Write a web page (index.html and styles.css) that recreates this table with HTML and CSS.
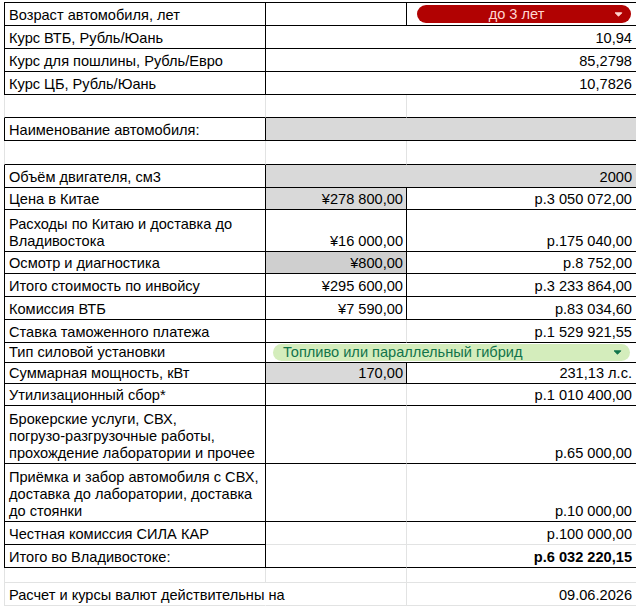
FILE: index.html
```html
<!DOCTYPE html>
<html lang="ru">
<head>
<meta charset="utf-8">
<title>Расчёт стоимости автомобиля</title>
<link rel="stylesheet" href="styles.css">
</head>
<body>
<div class="sheet">
  <!-- R1 -->
  <div class="cell bt bl br bb">Возраст автомобиля, лет</div>
  <div class="cell bt br bb"></div>
  <div class="cell bt bb last mid">
    <div class="chip chip-red"><span class="chip-text">до 3 лет</span><svg class="arrow" viewBox="0 0 10 6" width="9" height="5"><path d="M1 1 L9 1 L5 5 Z" fill="#ffd6d0" stroke="#ffd6d0" stroke-width="1.2" stroke-linejoin="round"/></svg></div>
  </div>
  <!-- R2 -->
  <div class="cell bl br bb">Курс ВТБ, Рубль/Юань</div>
  <div class="cell span2 bb last num">10,94</div>
  <!-- R3 -->
  <div class="cell bl br bb">Курс для пошлины, Рубль/Евро</div>
  <div class="cell span2 bb last num">85,2798</div>
  <!-- R4 -->
  <div class="cell bl br bb">Курс ЦБ, Рубль/Юань</div>
  <div class="cell span2 bb last num">10,7826</div>
  <!-- R5 -->
  <div class="cell gl bb"></div>
  <div class="cell bb"></div>
  <div class="cell bb last"></div>
  <!-- R6 -->
  <div class="cell bl br bb">Наименование автомобиля:</div>
  <div class="cell span2 bb last fill"></div>
  <!-- R7 -->
  <div class="cell gl bb"></div>
  <div class="cell bb"></div>
  <div class="cell bb last"></div>
  <!-- R8 -->
  <div class="cell bl br bb">Объём двигателя, см3</div>
  <div class="cell span2 bb last fill num">2000</div>
  <!-- R9 -->
  <div class="cell bl br bb">Цена в Китае</div>
  <div class="cell br bb fill num">¥278 800,00</div>
  <div class="cell bb last num">р.3 050 072,00</div>
  <!-- R10 -->
  <div class="cell bl br bb"><span class="lines">Расходы по Китаю и доставка до<br>Владивостока</span></div>
  <div class="cell br bb num">¥16 000,00</div>
  <div class="cell bb last num">р.175 040,00</div>
  <!-- R11 -->
  <div class="cell bl br bb">Осмотр и диагностика</div>
  <div class="cell br bb fill-dark num">¥800,00</div>
  <div class="cell bb last num">р.8 752,00</div>
  <!-- R12 -->
  <div class="cell bl br bb">Итого стоимость по инвойсу</div>
  <div class="cell br bb num">¥295 600,00</div>
  <div class="cell bb last num">р.3 233 864,00</div>
  <!-- R13 -->
  <div class="cell bl br bb">Комиссия ВТБ</div>
  <div class="cell br bb num">¥7 590,00</div>
  <div class="cell bb last num">р.83 034,60</div>
  <!-- R14 -->
  <div class="cell bl br bb">Ставка таможенного платежа</div>
  <div class="cell bb"></div>
  <div class="cell bb last num">р.1 529 921,55</div>
  <!-- R15 -->
  <div class="cell bl br bb">Тип силовой установки</div>
  <div class="cell span2 bb last mid">
    <div class="chip chip-green"><span class="chip-text">Топливо или параллельный гибрид</span><svg class="arrow" viewBox="0 0 10 6" width="9" height="5"><path d="M1 1 L9 1 L5 5 Z" fill="#11734b" stroke="#11734b" stroke-width="1.2" stroke-linejoin="round"/></svg></div>
  </div>
  <!-- R16 -->
  <div class="cell bl br bb">Суммарная мощность, кВт</div>
  <div class="cell br bb fill num">170,00</div>
  <div class="cell bb last num">231,13 л.с.</div>
  <!-- R17 -->
  <div class="cell bl br bb">Утилизационный сбор*</div>
  <div class="cell bb"></div>
  <div class="cell bb last num">р.1 010 400,00</div>
  <!-- R18 -->
  <div class="cell bl br bb"><span class="lines">Брокерские услуги, СВХ,<br>погрузо-разгрузочные работы,<br>прохождение лаборатории и прочее</span></div>
  <div class="cell bb"></div>
  <div class="cell bb last num">р.65 000,00</div>
  <!-- R19 -->
  <div class="cell bl br bb"><span class="lines">Приёмка и забор автомобиля с СВХ,<br>доставка до лаборатории, доставка<br>до стоянки</span></div>
  <div class="cell bb"></div>
  <div class="cell bb last num">р.10 000,00</div>
  <!-- R20 -->
  <div class="cell bl br bb">Честная комиссия СИЛА КАР</div>
  <div class="cell"></div>
  <div class="cell last num">р.100 000,00</div>
  <!-- R21 -->
  <div class="cell bl br bb">Итого во Владивостоке:</div>
  <div class="cell bb"></div>
  <div class="cell bb last num bold">р.6 032 220,15</div>
  <!-- R22 -->
  <div class="cell gl"></div>
  <div class="cell"></div>
  <div class="cell last"></div>
  <!-- R23 -->
  <div class="cell gl spill">Расчет и курсы валют действительны на</div>
  <div class="cell"></div>
  <div class="cell last num">09.06.2026</div>
</div>
</body>
</html>
```

FILE: styles.css
```css
html, body {
  margin: 0;
  padding: 0;
  background: #ffffff;
}

body {
  width: 636px;
  height: 610px;
  overflow: hidden;
  font-family: "Liberation Sans", Arial, sans-serif;
  font-size: 14.6px;
  color: #000000;
}

.sheet {
  display: grid;
  grid-template-columns: 262px 141px 229px;
  grid-template-rows:
    24px 23px 23px 23px 23px 23px 24px 23px 22px 42px 22px 23px
    23px 23px 20px 21px 22px 58px 58px 23px 23px 15px 23px;
  margin: 2px 0 0 4px;
}

.cell {
  box-sizing: border-box;
  display: flex;
  align-items: flex-end;
  padding: 0 3px 1px 4px;
  line-height: 17px;
  white-space: nowrap;
  overflow: hidden;
  border-right: 1px solid #e2e3e3;
  border-bottom: 1px solid #e2e3e3;
}

.lines {
  display: block;
}

.bt { border-top: 1px solid #000000; }
.bl { border-left: 1px solid #000000; }
.gl { border-left: 1px solid #e2e3e3; }
.br { border-right-color: #000000; }
.bb { border-bottom-color: #000000; }

.bl.br {
  overflow: visible;
  padding-right: 0;
}

.spill {
  overflow: visible;
  border-right-color: transparent;
  position: relative;
  z-index: 1;
}

.last {
  border-right: none;
  padding-right: 4px;
}

.span2 { grid-column: span 2; }

.num { justify-content: flex-end; }
.bold { font-weight: bold; }

.fill { background: #d9d9d9; }
.fill-dark { background: #cfcfcf; }

.mid {
  align-items: center;
  padding: 0;
}

.chip {
  box-sizing: border-box;
  display: flex;
  align-items: center;
  height: 18px;
  border-radius: 9px;
  line-height: 18px;
  flex: 1;
}

.chip-red {
  background: #b10202;
  color: #ffd6d0;
  margin: 0 5px 0 10px;
  padding: 0 8px 0 2px;
}

.chip-red .chip-text {
  flex: 1;
  text-align: center;
}

.chip-green {
  background: #d4edbc;
  color: #11734b;
  height: 17px;
  line-height: 17px;
  margin: 0 6px 0 7px;
  padding: 0 8px 0 10px;
}

.chip-green .chip-text {
  flex: 1;
}

.arrow {
  display: block;
  flex: none;
}
```
